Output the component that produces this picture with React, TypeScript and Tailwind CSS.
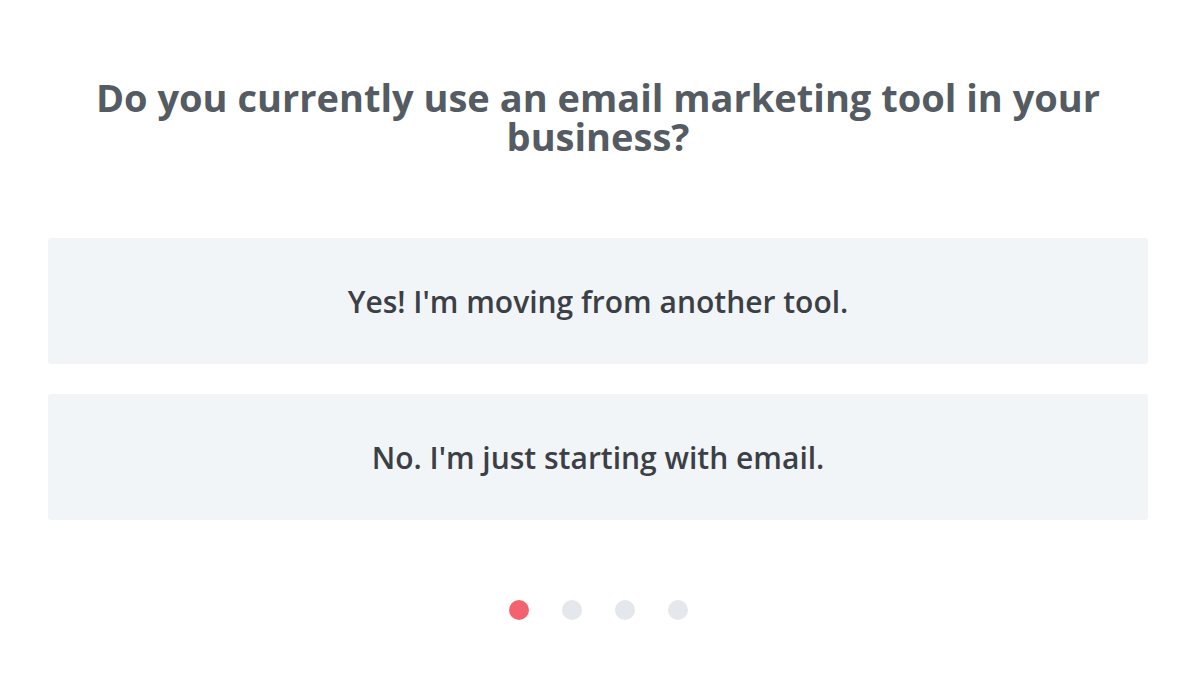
import React, { useState } from 'react';

const options = [
  "Yes! I'm moving from another tool.",
  "No. I'm just starting with email.",
];

const App: React.FC = () => {
  const [step] = useState(0);

  return (
    <div
      className="min-h-[678px] w-full bg-white pl-12 pr-[50px] pt-[78px]"
      style={{ fontFamily: '"Open Sans", "Noto Sans", sans-serif' }}
    >
      {/* Question */}
      <h1 className="mx-auto max-w-[1060px] text-center text-[38px] font-bold leading-[39px] text-[#545b62]">
        Do you currently use an email marketing tool in your business?
      </h1>

      {/* Answers */}
      <div className="mt-[82px] flex flex-col gap-[30px]">
        {options.map((label) => (
          <button
            key={label}
            className="flex h-[126px] w-full items-center justify-center rounded-[3px] bg-[#f2f5f8] text-[30px] font-semibold text-[#3b4046]"
          >
            {label}
          </button>
        ))}
      </div>

      {/* Progress dots */}
      <div className="mt-[80px] flex items-center justify-center gap-[33px]">
        {[0, 1, 2, 3].map((i) => (
          <span
            key={i}
            className={
              i === step
                ? 'h-[20px] w-[20px] rounded-full bg-[#f2636f]'
                : 'h-[20px] w-[20px] rounded-full bg-[#e4e7eb]'
            }
          />
        ))}
      </div>
    </div>
  );
};

export default App;
